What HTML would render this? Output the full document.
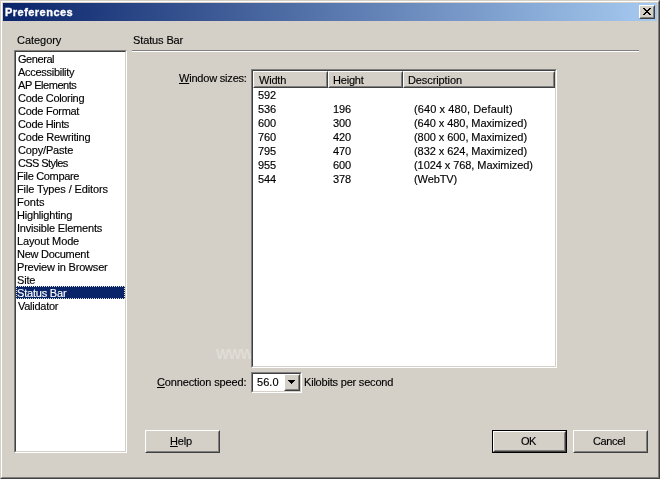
<!DOCTYPE html>
<html>
<head>
<meta charset="utf-8">
<title>Preferences</title>
<style>
html,body{margin:0;padding:0;}
body{width:660px;height:479px;overflow:hidden;background:#d4d0c8;position:relative;
  font-family:"Liberation Sans",sans-serif;font-size:11px;line-height:13px;color:#000;}
*{box-sizing:border-box;}
.abs{position:absolute;}
.t{position:absolute;white-space:pre;height:13px;line-height:13px;will-change:transform;-webkit-text-stroke:0.15px;}
.t u{text-decoration:underline;}
#frame{left:0;top:0;width:660px;height:479px;border:1px solid;border-color:#d4d0c8 #404040 #404040 #d4d0c8;}
#frame2{left:1px;top:1px;width:658px;height:477px;border:1px solid;border-color:#fff #808080 #808080 #fff;}
#title{left:3px;top:3px;width:654px;height:18px;background:linear-gradient(to right,#0a246a 0%,#a6caf0 100%);}
.btn{position:absolute;background:#d4d0c8;border:1px solid;border-color:#fff #404040 #404040 #fff;}
.btn:before{content:"";position:absolute;left:0;top:0;right:0;bottom:0;border:1px solid;border-color:#d4d0c8 #808080 #808080 #d4d0c8;}
.btn.def{border-color:#000;}
.btn.def:before{border-color:#fff #404040 #404040 #fff;}
.btn.def:after{content:"";position:absolute;left:1px;top:1px;right:1px;bottom:1px;border:1px solid;border-color:#d4d0c8 #808080 #808080 #d4d0c8;}
.sunken{position:absolute;background:#fff;border:1px solid;border-color:#808080 #fff #fff #808080;}
.sunken:before{content:"";position:absolute;left:0;top:0;right:0;bottom:0;border:1px solid;border-color:#404040 #d4d0c8 #d4d0c8 #404040;}
#sel{left:16px;top:286px;width:109px;height:13px;background:#0a246a;outline:1px dotted #e8e4d2;outline-offset:-1px;}
.hd{position:absolute;top:71px;height:17px;background:#d4d0c8;border:1px solid;border-color:#fff #404040 #404040 #fff;}
.hd:before{content:"";position:absolute;left:0;top:0;right:0;bottom:0;border:1px solid;border-color:#d4d0c8 #808080 #808080 #d4d0c8;}
</style>
</head>
<body>

<div id="frame" class="abs"></div>
<div id="frame2" class="abs"></div>
<div id="title" class="abs"></div>
<div class="btn" style="left:639px;top:5px;width:16px;height:14px;">
  <svg class="abs" style="left:3px;top:2px" width="8" height="7" viewBox="0 0 8 7" shape-rendering="crispEdges">
    <path d="M0 0h2v1h-2zM6 0h2v1h-2zM1 1h2v1h-2zM5 1h2v1h-2zM2 2h4v1h-4zM3 3h2v1h-2zM2 4h4v1h-4zM1 5h2v1h-2zM5 5h2v1h-2zM0 6h2v1h-2zM6 6h2v1h-2z" fill="#000"/>
  </svg>
</div>
<div class="sunken" style="left:14px;top:50px;width:113px;height:403px;"></div>
<div id="sel" class="abs"></div>
<div class="abs" style="left:132px;top:50px;width:507px;height:1px;background:#808080;"></div>
<div class="abs" style="left:132px;top:51px;width:507px;height:1px;background:#fff;"></div>
<div class="abs" style="left:216px;top:346px;width:35px;height:16px;overflow:hidden;font-weight:bold;font-size:14px;line-height:16px;color:#e0ddd6;letter-spacing:-1px;white-space:pre;">WWW</div>
<div class="sunken" style="left:251px;top:69px;width:306px;height:299px;"></div>
<div class="hd" style="left:253px;width:75px;"></div>
<div class="hd" style="left:328px;width:75px;"></div>
<div class="hd" style="left:403px;width:152px;"></div>
<div class="sunken" style="left:251px;top:372px;width:51px;height:21px;"></div>
<div class="btn" style="left:284px;top:374px;width:16px;height:17px;">
  <svg class="abs" style="left:3px;top:5px" width="7" height="4" viewBox="0 0 7 4" shape-rendering="crispEdges">
    <path d="M0 0h7v1h-7zM1 1h5v1h-5zM2 2h3v1h-3zM3 3h1v1h-1z" fill="#000"/>
  </svg>
</div>
<div class="btn" style="left:145px;top:430px;width:75px;height:23px;"></div>
<div class="btn def" style="left:492px;top:430px;width:75px;height:23px;"></div>
<div class="btn" style="left:573px;top:430px;width:75px;height:23px;"></div>

<div class="t" style="left:4.7px;top:6px;letter-spacing:0.47px;font-weight:bold;-webkit-text-stroke:0.35px;color:#fff;">Preferences</div>
<div class="t" style="left:16.7px;top:34px;letter-spacing:-0.04px;">Category</div>
<div class="t" style="left:133px;top:34px;letter-spacing:-0.122px;">Status Bar</div>
<div class="t" style="left:17.7px;top:53px;letter-spacing:-0.433px;">General</div>
<div class="t" style="left:17.7px;top:66px;letter-spacing:-0.282px;">Accessibility</div>
<div class="t" style="left:17.7px;top:79px;letter-spacing:-0.452px;">AP Elements</div>
<div class="t" style="left:17.7px;top:92px;letter-spacing:-0.317px;">Code Coloring</div>
<div class="t" style="left:17.7px;top:105px;letter-spacing:-0.277px;">Code Format</div>
<div class="t" style="left:17.7px;top:118px;letter-spacing:-0.34px;">Code Hints</div>
<div class="t" style="left:17.7px;top:131px;letter-spacing:-0.2px;">Code Rewriting</div>
<div class="t" style="left:17.7px;top:144px;letter-spacing:-0.169px;">Copy/Paste</div>
<div class="t" style="left:17.7px;top:157px;letter-spacing:-0.589px;">CSS Styles</div>
<div class="t" style="left:17px;top:170px;letter-spacing:-0.321px;">File Compare</div>
<div class="t" style="left:17px;top:183px;letter-spacing:-0.119px;">File Types / Editors</div>
<div class="t" style="left:17px;top:196px;letter-spacing:-0.025px;">Fonts</div>
<div class="t" style="left:17px;top:209px;letter-spacing:-0.2px;">Highlighting</div>
<div class="t" style="left:17px;top:222px;letter-spacing:-0.2px;">Invisible Elements</div>
<div class="t" style="left:17px;top:235px;letter-spacing:-0.137px;">Layout Mode</div>
<div class="t" style="left:17px;top:248px;letter-spacing:-0.27px;">New Document</div>
<div class="t" style="left:17px;top:261px;letter-spacing:-0.2px;">Preview in Browser</div>
<div class="t" style="left:17px;top:274px;letter-spacing:-0.2px;">Site</div>
<div class="t" style="left:17px;top:287px;letter-spacing:-0.2px;color:#fff;">Status Bar</div>
<div class="t" style="left:17.7px;top:300px;letter-spacing:-0.27px;">Validator</div>
<div class="t" style="left:178.7px;top:72px;letter-spacing:-0.2px;"><u>W</u>indow sizes:</div>
<div class="t" style="left:258.7px;top:74px;letter-spacing:-0.2px;">Width</div>
<div class="t" style="left:332.5px;top:74px;letter-spacing:-0.2px;">Height</div>
<div class="t" style="left:407.5px;top:74px;letter-spacing:-0.095px;">Description</div>
<div class="t" style="left:258px;top:89px;letter-spacing:-0.1px;">592</div>
<div class="t" style="left:258px;top:103px;letter-spacing:-0.1px;">536</div>
<div class="t" style="left:333px;top:103px;letter-spacing:-0.1px;">196</div>
<div class="t" style="left:414.0px;top:103px;letter-spacing:0.102px;">(640 x 480, Default)</div>
<div class="t" style="left:258px;top:117px;letter-spacing:-0.1px;">600</div>
<div class="t" style="left:333px;top:117px;letter-spacing:-0.1px;">300</div>
<div class="t" style="left:414.0px;top:117px;letter-spacing:-0.06px;">(640 x 480, Maximized)</div>
<div class="t" style="left:258px;top:131px;letter-spacing:-0.1px;">760</div>
<div class="t" style="left:333px;top:131px;letter-spacing:-0.1px;">420</div>
<div class="t" style="left:414.0px;top:131px;letter-spacing:-0.06px;">(800 x 600, Maximized)</div>
<div class="t" style="left:258px;top:145px;letter-spacing:-0.1px;">795</div>
<div class="t" style="left:333px;top:145px;letter-spacing:-0.1px;">470</div>
<div class="t" style="left:414.0px;top:145px;letter-spacing:-0.06px;">(832 x 624, Maximized)</div>
<div class="t" style="left:258px;top:159px;letter-spacing:-0.1px;">955</div>
<div class="t" style="left:333px;top:159px;letter-spacing:-0.1px;">600</div>
<div class="t" style="left:414.0px;top:159px;letter-spacing:-0.066px;">(1024 x 768, Maximized)</div>
<div class="t" style="left:258px;top:173px;letter-spacing:-0.1px;">544</div>
<div class="t" style="left:333px;top:173px;letter-spacing:-0.1px;">378</div>
<div class="t" style="left:414.0px;top:173px;letter-spacing:-0.107px;">(WebTV)</div>
<div class="t" style="left:156.7px;top:376px;letter-spacing:-0.134px;"><u>C</u>onnection speed:</div>
<div class="t" style="left:256.7px;top:376px;letter-spacing:0.033px;">56.0</div>
<div class="t" style="left:304px;top:376px;letter-spacing:-0.2px;">Kilobits per second</div>
<div class="t" style="left:170.4px;top:435px;letter-spacing:-0.2px;"><u>H</u>elp</div>
<div class="t" style="left:520.6px;top:435px;letter-spacing:-0.6px;">OK</div>
<div class="t" style="left:592.6px;top:435px;letter-spacing:-0.354px;">Cancel</div>
</body>
</html>
